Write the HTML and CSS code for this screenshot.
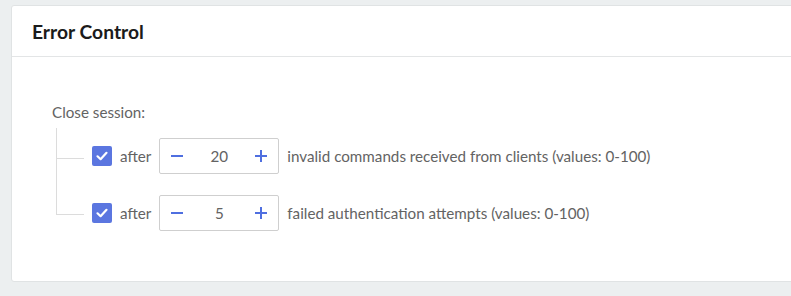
FILE: index.html
```html
<!DOCTYPE html>
<html>
<head>
<meta charset="utf-8">
<link rel="stylesheet" href="styles.css">
</head>
<body>
<div class="page">
  <section class="card">
    <header class="card-header"><h2 class="card-title">Error Control</h2></header>
    <div class="card-body">
      <div class="label">Close session:</div>
      <div class="tree">
        <div class="tree-row">
          <div class="conn"><div class="conn-top"></div><div class="conn-rest"></div></div>
          <div class="row-content">
            <span class="checkbox"><svg width="20" height="20" viewBox="0 0 20 20"><path d="M5.5 10.3 L8.6 13.2 L14.5 6.8" fill="none" stroke="#fff" stroke-width="2.2" stroke-linecap="round" stroke-linejoin="round"/></svg></span>
            <span class="text">after</span>
            <div class="stepper">
              <span class="step-btn"><svg width="12" height="12" viewBox="0 0 12 12"><path d="M0 6 H12" stroke="currentColor" stroke-width="2"/></svg></span>
              <span class="step-value">20</span>
              <span class="step-btn"><svg width="12" height="12" viewBox="0 0 12 12"><path d="M0 6 H12 M6 0 V12" stroke="currentColor" stroke-width="2"/></svg></span>
            </div>
            <span class="text">invalid commands received from clients (values: 0-100)</span>
          </div>
        </div>
        <div class="tree-row">
          <div class="conn"><div class="conn-top"></div><div class="conn-rest"></div></div>
          <div class="row-content">
            <span class="checkbox"><svg width="20" height="20" viewBox="0 0 20 20"><path d="M5.5 10.3 L8.6 13.2 L14.5 6.8" fill="none" stroke="#fff" stroke-width="2.2" stroke-linecap="round" stroke-linejoin="round"/></svg></span>
            <span class="text">after</span>
            <div class="stepper">
              <span class="step-btn"><svg width="12" height="12" viewBox="0 0 12 12"><path d="M0 6 H12" stroke="currentColor" stroke-width="2"/></svg></span>
              <span class="step-value">5</span>
              <span class="step-btn"><svg width="12" height="12" viewBox="0 0 12 12"><path d="M0 6 H12 M6 0 V12" stroke="currentColor" stroke-width="2"/></svg></span>
            </div>
            <span class="text">failed authentication attempts (values: 0-100)</span>
          </div>
        </div>
      </div>
    </div>
  </section>
</div>
</body>
</html>
```
FILE: styles.css
```css
html, body {
  margin: 0;
  padding: 0;
  overflow: hidden;
  background: #eceff0;
  font-family: Lato, "Liberation Sans", sans-serif;
  font-size: 15.2px;
  color: #636363;
}
.page {
  padding: 5px 0 0 11px;
  height: 296px;
  box-sizing: border-box;
}
.card {
  background: #fff;
  border: 1px solid #e0e3e4;
  border-radius: 3px;
  margin-right: -20px;
}
.card-header {
  height: 50px;
  border-bottom: 1px solid #e3e5e6;
  display: flex;
  align-items: center;
  padding-left: 20px;
}
.card-title {
  margin: 0;
  font-size: 19.3px;
  font-weight: 700;
  color: #1b1b1b;
}
.card-body {
  padding: 45px 0 50px 40px;
}
.label {
  line-height: 20px;
}
.tree {
  margin-top: 6px;
  margin-left: 4px;
}
.tree-row {
  display: flex;
  padding-top: 21px;
}
.tree-row:first-child {
  padding-top: 10px;
}
.conn {
  width: 28px;
  margin-top: -21px;
  display: flex;
  flex-direction: column;
}
.tree-row:first-child .conn {
  margin-top: -10px;
}
.conn-top {
  height: 41px;
  border-left: 1px solid #dcdcdc;
  border-bottom: 1px solid #dcdcdc;
  box-sizing: border-box;
}
.tree-row:first-child .conn-top {
  height: 31px;
}
.conn-rest {
  flex: 1;
}
.tree-row:not(:last-child) .conn-rest {
  border-left: 1px solid #dcdcdc;
}
.row-content {
  display: flex;
  align-items: center;
  gap: 8px;
  margin-left: 8px;
}
.checkbox {
  width: 20px;
  height: 20px;
  border-radius: 2px;
  background: #5b76e0;
  display: flex;
}
.text {
  line-height: 20px;
}
.stepper {
  width: 120px;
  height: 36px;
  box-sizing: border-box;
  border: 1px solid #cfcfcf;
  border-radius: 2px;
  display: flex;
  align-items: center;
  justify-content: space-between;
  padding: 0 11px;
}
.step-btn {
  color: #4f6fe0;
  display: flex;
}
.step-value {
  color: #636363;
}
```
